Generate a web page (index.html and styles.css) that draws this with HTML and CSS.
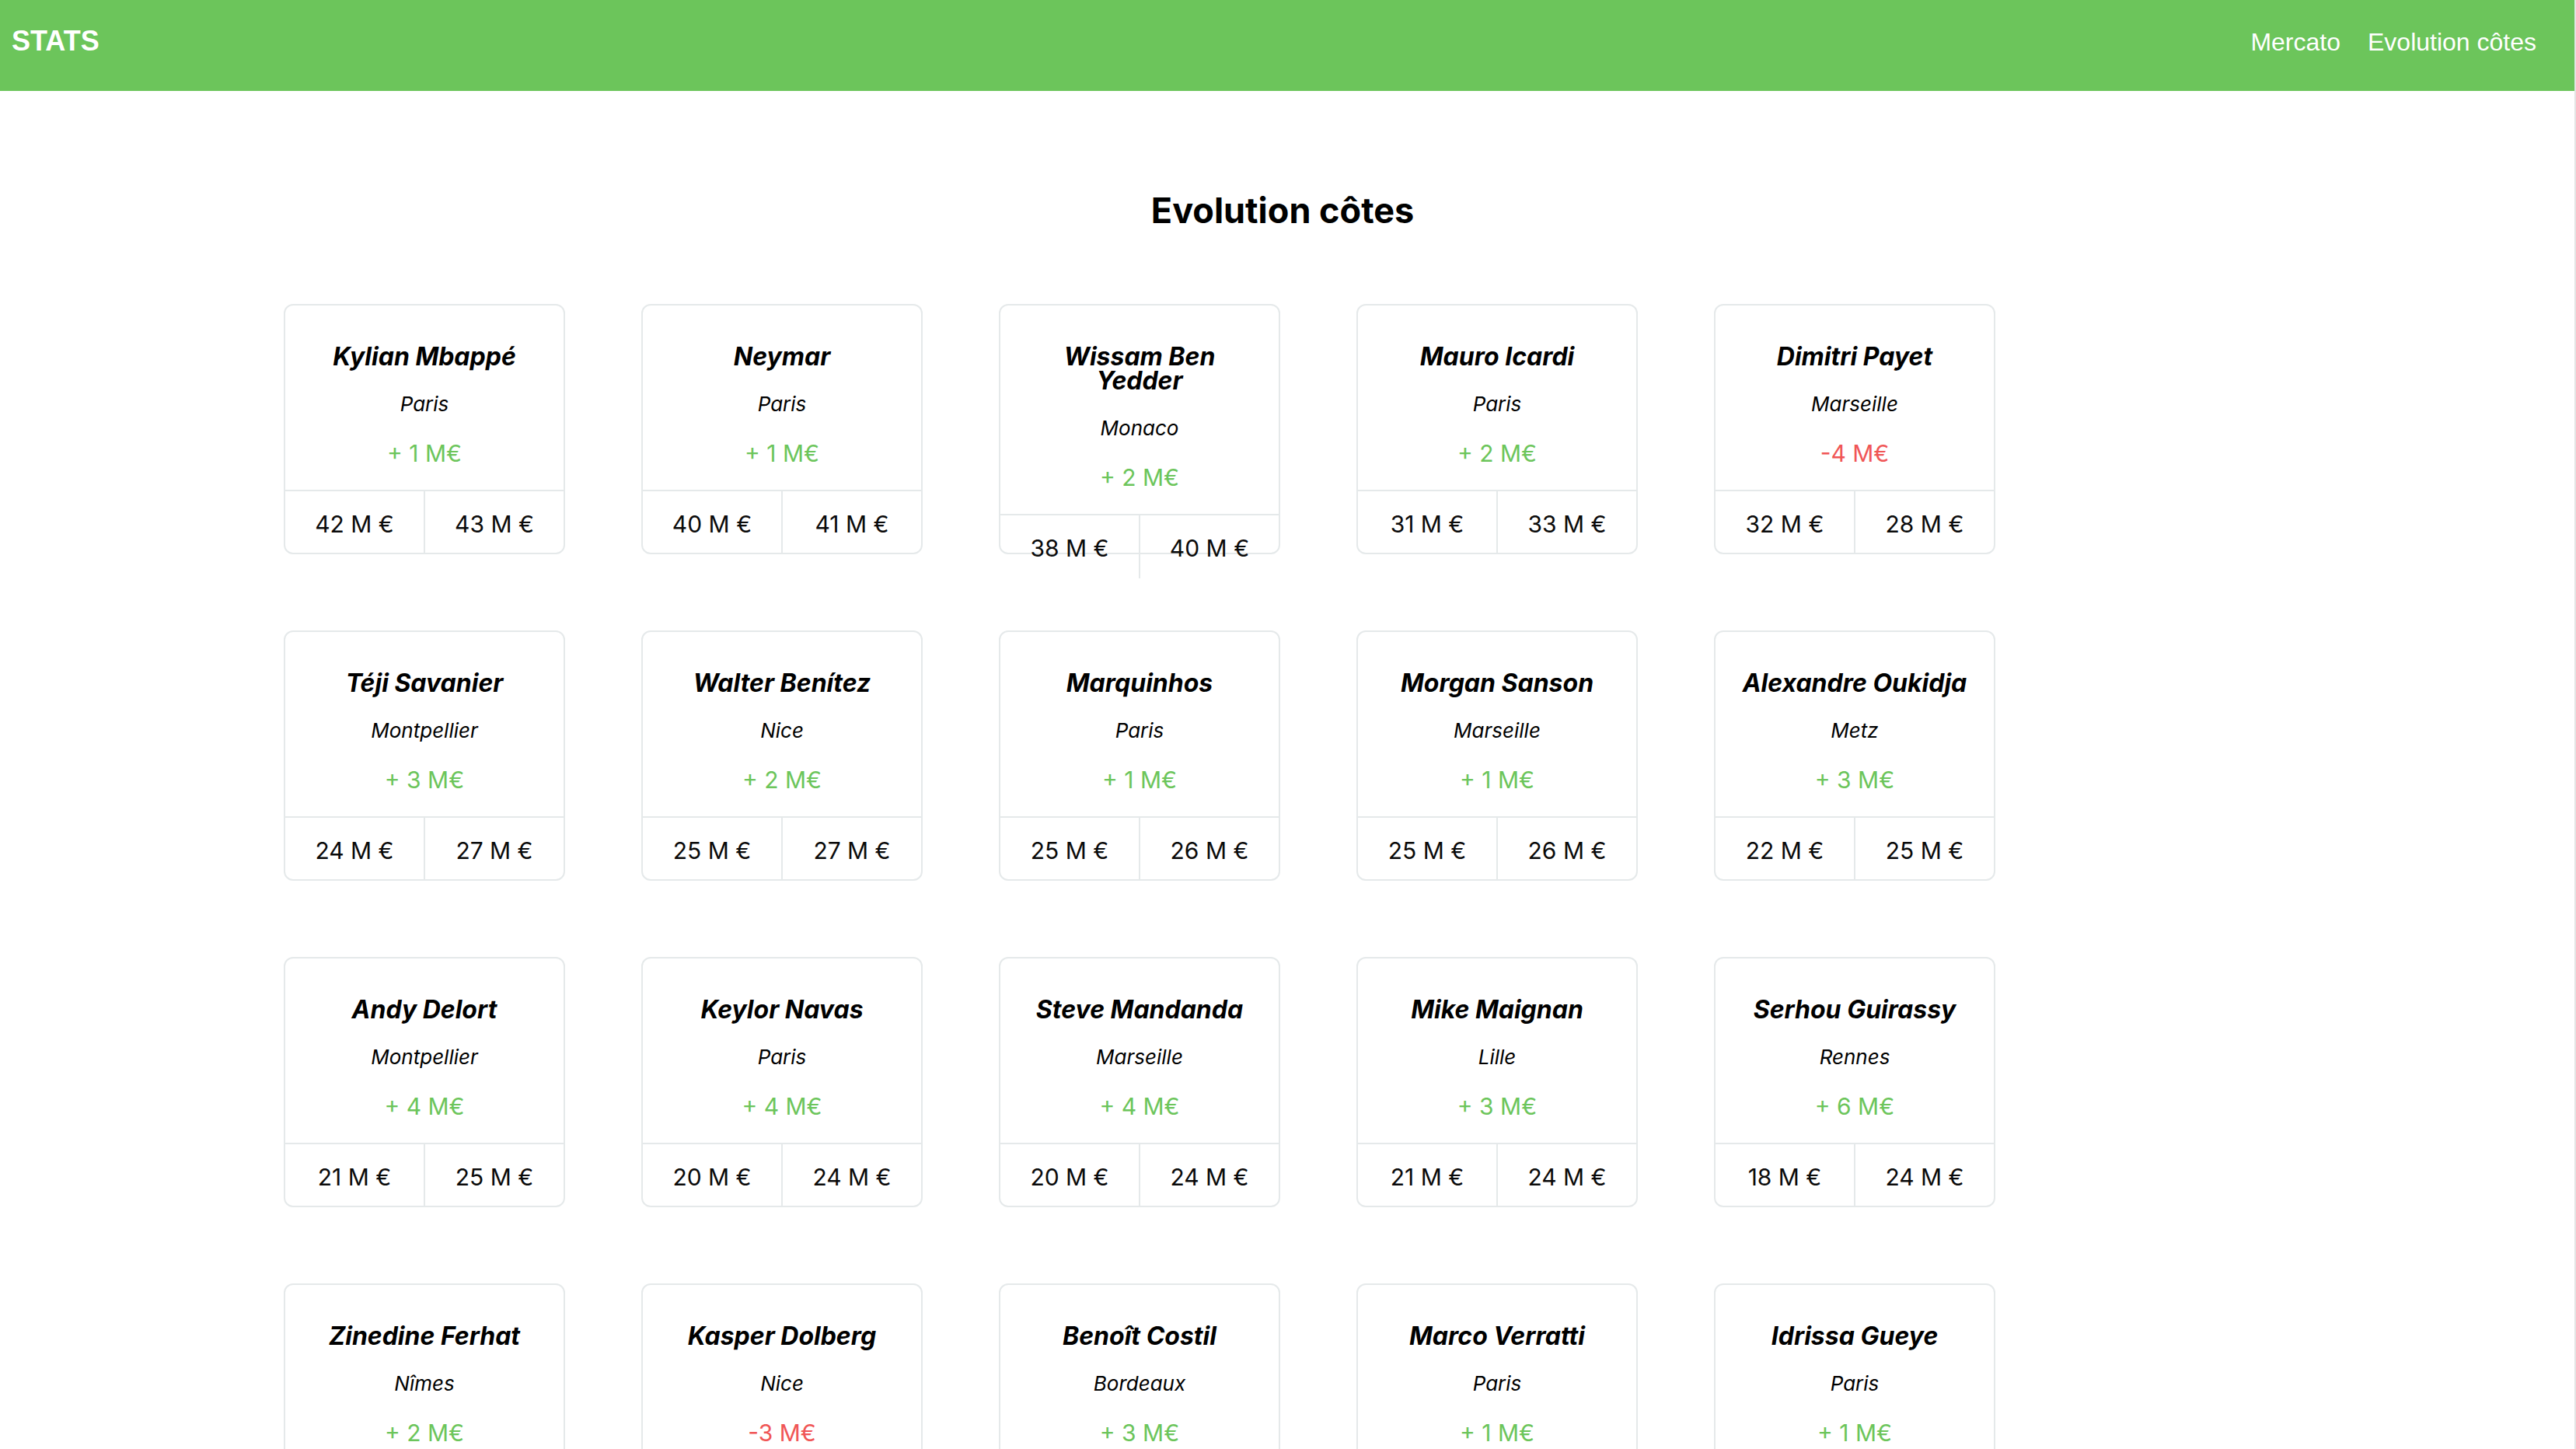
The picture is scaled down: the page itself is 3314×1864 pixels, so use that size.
FILE: index.html
```html
<!DOCTYPE html>
<html lang="fr">
<head>
<meta charset="utf-8">
<title>Stats - Evolution côtes</title>
<link rel="stylesheet" href="styles.css">
</head>
<body>
<header class="navbar">
  <a class="brand" href="#">STATS</a>
  <nav class="nav-links">
    <a href="#">Mercato</a>
    <a href="#">Evolution côtes</a>
  </nav>
</header>
<main class="page">
  <h1 class="page-title">Evolution côtes</h1>
  <section class="cards">
    <article class="card"><div class="card-body"><h2 class="name">Kylian Mbappé</h2><p class="club">Paris</p><p class="delta up">+ 1 M€</p></div><div class="card-foot"><span>42 M €</span><span>43 M €</span></div></article>
    <article class="card"><div class="card-body"><h2 class="name">Neymar</h2><p class="club">Paris</p><p class="delta up">+ 1 M€</p></div><div class="card-foot"><span>40 M €</span><span>41 M €</span></div></article>
    <article class="card"><div class="card-body"><h2 class="name">Wissam Ben Yedder</h2><p class="club">Monaco</p><p class="delta up">+ 2 M€</p></div><div class="card-foot"><span>38 M €</span><span>40 M €</span></div></article>
    <article class="card"><div class="card-body"><h2 class="name">Mauro Icardi</h2><p class="club">Paris</p><p class="delta up">+ 2 M€</p></div><div class="card-foot"><span>31 M €</span><span>33 M €</span></div></article>
    <article class="card"><div class="card-body"><h2 class="name">Dimitri Payet</h2><p class="club">Marseille</p><p class="delta down">-4 M€</p></div><div class="card-foot"><span>32 M €</span><span>28 M €</span></div></article>

    <article class="card"><div class="card-body"><h2 class="name">Téji Savanier</h2><p class="club">Montpellier</p><p class="delta up">+ 3 M€</p></div><div class="card-foot"><span>24 M €</span><span>27 M €</span></div></article>
    <article class="card"><div class="card-body"><h2 class="name">Walter Benítez</h2><p class="club">Nice</p><p class="delta up">+ 2 M€</p></div><div class="card-foot"><span>25 M €</span><span>27 M €</span></div></article>
    <article class="card"><div class="card-body"><h2 class="name">Marquinhos</h2><p class="club">Paris</p><p class="delta up">+ 1 M€</p></div><div class="card-foot"><span>25 M €</span><span>26 M €</span></div></article>
    <article class="card"><div class="card-body"><h2 class="name">Morgan Sanson</h2><p class="club">Marseille</p><p class="delta up">+ 1 M€</p></div><div class="card-foot"><span>25 M €</span><span>26 M €</span></div></article>
    <article class="card"><div class="card-body"><h2 class="name">Alexandre Oukidja</h2><p class="club">Metz</p><p class="delta up">+ 3 M€</p></div><div class="card-foot"><span>22 M €</span><span>25 M €</span></div></article>

    <article class="card"><div class="card-body"><h2 class="name">Andy Delort</h2><p class="club">Montpellier</p><p class="delta up">+ 4 M€</p></div><div class="card-foot"><span>21 M €</span><span>25 M €</span></div></article>
    <article class="card"><div class="card-body"><h2 class="name">Keylor Navas</h2><p class="club">Paris</p><p class="delta up">+ 4 M€</p></div><div class="card-foot"><span>20 M €</span><span>24 M €</span></div></article>
    <article class="card"><div class="card-body"><h2 class="name">Steve Mandanda</h2><p class="club">Marseille</p><p class="delta up">+ 4 M€</p></div><div class="card-foot"><span>20 M €</span><span>24 M €</span></div></article>
    <article class="card"><div class="card-body"><h2 class="name">Mike Maignan</h2><p class="club">Lille</p><p class="delta up">+ 3 M€</p></div><div class="card-foot"><span>21 M €</span><span>24 M €</span></div></article>
    <article class="card"><div class="card-body"><h2 class="name">Serhou Guirassy</h2><p class="club">Rennes</p><p class="delta up">+ 6 M€</p></div><div class="card-foot"><span>18 M €</span><span>24 M €</span></div></article>

    <article class="card"><div class="card-body"><h2 class="name">Zinedine Ferhat</h2><p class="club">Nîmes</p><p class="delta up">+ 2 M€</p></div><div class="card-foot"><span>18 M €</span><span>20 M €</span></div></article>
    <article class="card"><div class="card-body"><h2 class="name">Kasper Dolberg</h2><p class="club">Nice</p><p class="delta down">-3 M€</p></div><div class="card-foot"><span>23 M €</span><span>20 M €</span></div></article>
    <article class="card"><div class="card-body"><h2 class="name">Benoît Costil</h2><p class="club">Bordeaux</p><p class="delta up">+ 3 M€</p></div><div class="card-foot"><span>17 M €</span><span>20 M €</span></div></article>
    <article class="card"><div class="card-body"><h2 class="name">Marco Verratti</h2><p class="club">Paris</p><p class="delta up">+ 1 M€</p></div><div class="card-foot"><span>30 M €</span><span>31 M €</span></div></article>
    <article class="card"><div class="card-body"><h2 class="name">Idrissa Gueye</h2><p class="club">Paris</p><p class="delta up">+ 1 M€</p></div><div class="card-foot"><span>19 M €</span><span>20 M €</span></div></article>
  </section>
</main>
</body>
</html>
```

FILE: styles.css
```css
html {
  border-right: 2px solid #e4e4e4;
  background: #fff;
}

body {
  margin: 0;
  font-family: Inter, "Noto Sans", sans-serif;
  color: #0a0a0a;
}

.navbar {
  height: 117px;
  box-sizing: border-box;
  background: #6cc55b;
  display: flex;
  align-items: baseline;
  justify-content: space-between;
  padding: 30px 49px 0 15px;
  font-family: "Liberation Sans", Arial, sans-serif;
  line-height: 46px;
}

.brand {
  color: #fff;
  font-weight: 700;
  font-size: 36px;
  text-decoration: none;
}

.nav-links {
  display: flex;
  gap: 35px;
}

.nav-links a {
  color: #fff;
  font-size: 32px;
  text-decoration: none;
}

.page {
  padding-bottom: 100px;
}

.page-title {
  margin: 128px 0 0;
  padding-right: 12px;
  text-align: center;
  font-size: 45px;
  line-height: 52px;
  font-weight: 700;
  color: #000;
}

.cards {
  width: 2582px;
  margin: 94px auto 0;
  display: flex;
  flex-wrap: wrap;
  gap: 98px;
}

.card {
  width: 362px;
  height: 322px;
  box-sizing: border-box;
  border: 2px solid #e5e9ea;
  border-radius: 12px;
  background: #fff;
  text-align: center;
}

.card-body {
  padding: 50px 28px 24px;
}

.name {
  margin: 0 0 26px;
  font-size: 32px;
  line-height: 31px;
  font-weight: 700;
  font-style: italic;
  color: #000;
}

.club {
  margin: 0 0 22px;
  font-size: 26px;
  line-height: 39px;
  font-style: italic;
  color: #000;
}

.delta {
  margin: 0;
  font-size: 30px;
  line-height: 45px;
}

.delta.up {
  color: #6cc55b;
}

.delta.down {
  color: #f05656;
}

.card-foot {
  display: flex;
  border-top: 2px solid #e5e9ea;
}

.card-foot span {
  flex: 1;
  padding: 20px 0 16px;
  font-size: 30px;
  line-height: 45px;
  color: #0a0a0a;
}

.card-foot span + span {
  border-left: 2px solid #e5e9ea;
}
```
